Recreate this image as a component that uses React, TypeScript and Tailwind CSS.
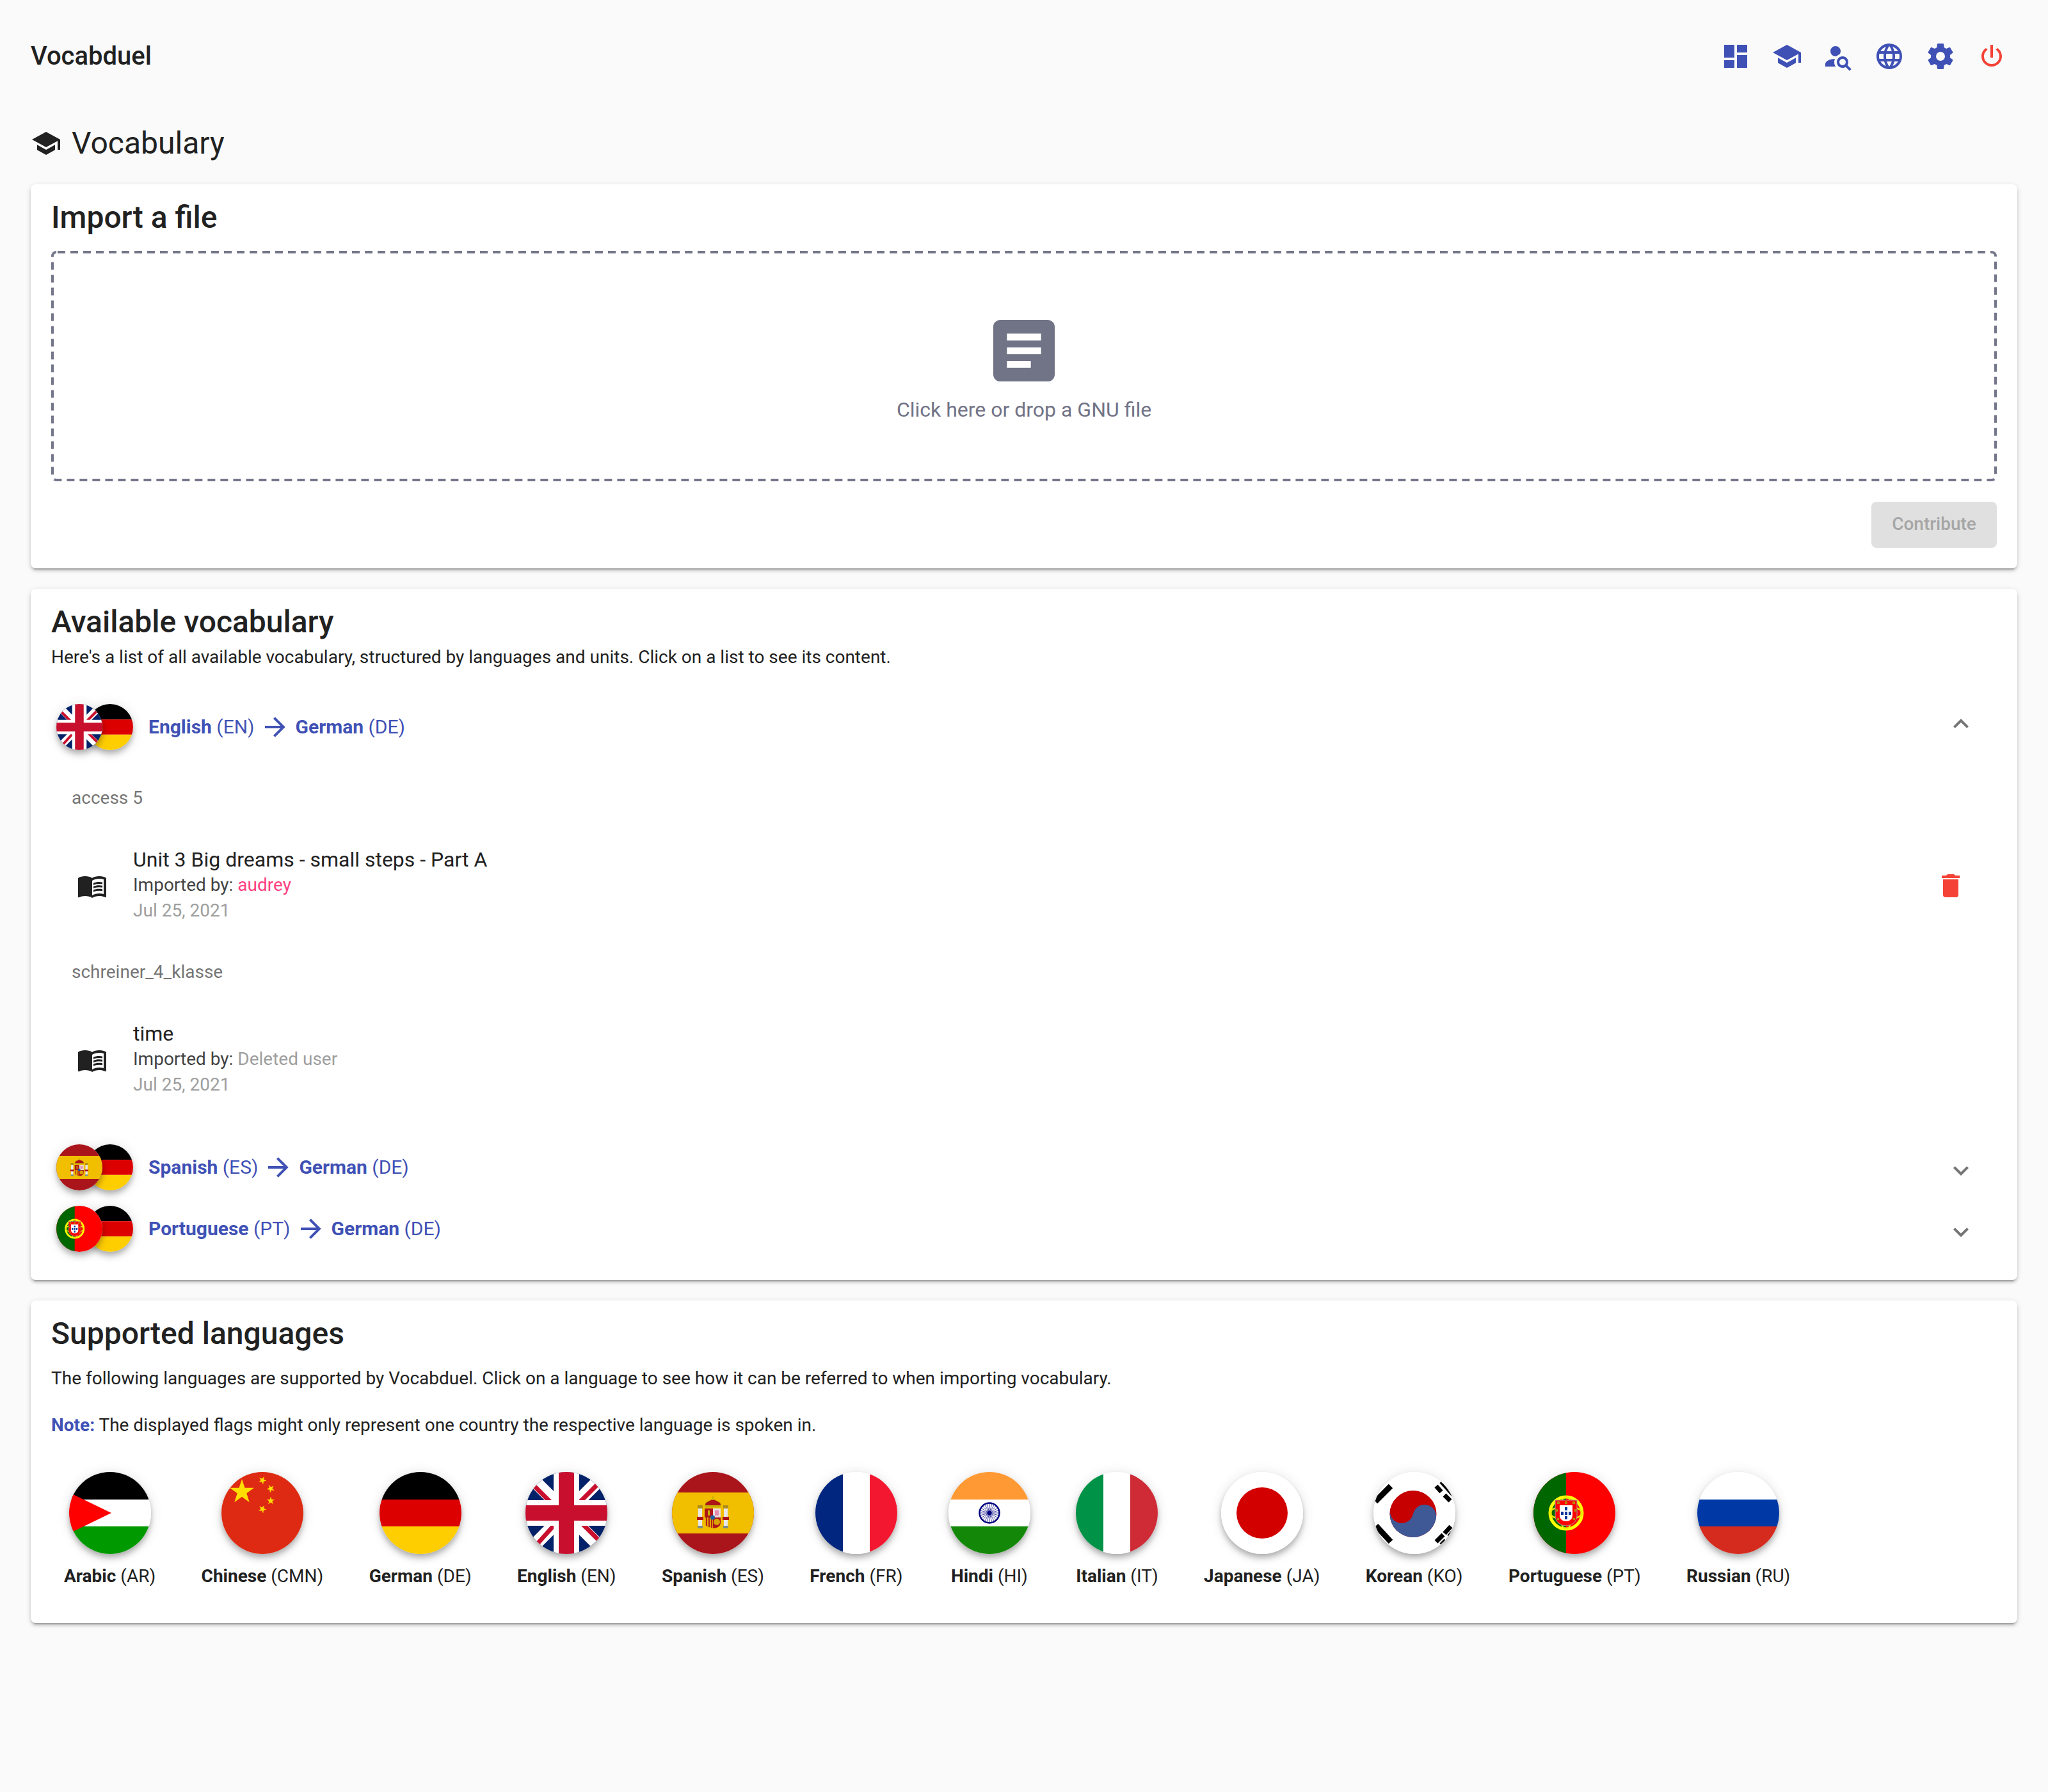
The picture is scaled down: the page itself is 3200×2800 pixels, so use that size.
import { ReactNode } from "react";

const mdi = {
  dashboard: "M13,3V9H21V3M13,21H21V11H13M3,21H11V15H3M3,13H11V3H3V13Z",
  school: "M12,3L1,9L12,15L21,10.09V17H23V9M5,13.18V17.18L12,21L19,17.18V13.18L12,17L5,13.18Z",
  search:
    "M15.5,12C18,12 20,14 20,16.5C20,17.38 19.75,18.21 19.31,18.9L22.39,22L21,23.39L17.88,20.32C17.19,20.75 16.37,21 15.5,21C13,21 11,19 11,16.5C11,14 13,12 15.5,12M15.5,14A2.5,2.5 0 0,0 13,16.5A2.5,2.5 0 0,0 15.5,19A2.5,2.5 0 0,0 18,16.5A2.5,2.5 0 0,0 15.5,14M10,4A4,4 0 0,1 14,8C14,8.91 13.69,9.75 13.18,10.43C12.32,10.75 11.55,11.26 10.91,11.9L10,12A4,4 0 0,1 6,8A4,4 0 0,1 10,4M2,20V18C2,15.88 5.31,14.14 9.5,14C9.18,14.78 9,15.62 9,16.5C9,17.79 9.38,19 10,20H2Z",
  web: "M16.36,14C16.44,13.34 16.5,12.68 16.5,12C16.5,11.32 16.44,10.66 16.36,10H19.74C19.9,10.64 20,11.31 20,12C20,12.69 19.9,13.36 19.74,14M14.59,19.56C15.19,18.45 15.65,17.25 15.97,16H18.92C17.96,17.65 16.43,18.93 14.59,19.56M14.34,14H9.66C9.56,13.34 9.5,12.68 9.5,12C9.5,11.32 9.56,10.65 9.66,10H14.34C14.43,10.65 14.5,11.32 14.5,12C14.5,12.68 14.43,13.34 14.34,14M12,19.96C11.17,18.76 10.5,17.43 10.09,16H13.91C13.5,17.43 12.83,18.76 12,19.96M8,8H5.08C6.03,6.34 7.57,5.06 9.4,4.44C8.8,5.55 8.35,6.75 8,8M5.08,16H8C8.35,17.25 8.8,18.45 9.4,19.56C7.57,18.93 6.03,17.65 5.08,16M4.26,14C4.1,13.36 4,12.69 4,12C4,11.31 4.1,10.64 4.26,10H7.64C7.56,10.66 7.5,11.32 7.5,12C7.5,12.68 7.56,13.34 7.64,14M12,4.03C12.83,5.23 13.5,6.57 13.91,8H10.09C10.5,6.57 11.17,5.23 12,4.03M18.92,8H15.97C15.65,6.75 15.19,5.55 14.59,4.44C16.43,5.07 17.96,6.34 18.92,8M12,2C6.47,2 2,6.5 2,12A10,10 0 0,0 12,22A10,10 0 0,0 22,12A10,10 0 0,0 12,2Z",
  cog: "M12,15.5A3.5,3.5 0 0,1 8.5,12A3.5,3.5 0 0,1 12,8.5A3.5,3.5 0 0,1 15.5,12A3.5,3.5 0 0,1 12,15.5M19.43,12.97C19.47,12.65 19.5,12.33 19.5,12C19.5,11.67 19.47,11.34 19.43,11L21.54,9.37C21.73,9.22 21.78,8.95 21.66,8.73L19.66,5.27C19.54,5.05 19.27,4.96 19.05,5.05L16.56,6.05C16.04,5.66 15.5,5.32 14.87,5.07L14.5,2.42C14.46,2.18 14.25,2 14,2H10C9.75,2 9.54,2.18 9.5,2.42L9.13,5.07C8.5,5.32 7.96,5.66 7.44,6.05L4.95,5.05C4.73,4.96 4.46,5.05 4.34,5.27L2.34,8.73C2.21,8.95 2.27,9.22 2.46,9.37L4.57,11C4.53,11.34 4.5,11.67 4.5,12C4.5,12.33 4.53,12.65 4.57,12.97L2.46,14.63C2.27,14.78 2.21,15.05 2.34,15.27L4.34,18.73C4.46,18.95 4.73,19.03 4.95,18.95L7.44,17.94C7.96,18.34 8.5,18.68 9.13,18.93L9.5,21.58C9.54,21.82 9.75,22 10,22H14C14.25,22 14.46,21.82 14.5,21.58L14.87,18.93C15.5,18.67 16.04,18.34 16.56,17.94L19.05,18.95C19.27,19.03 19.54,18.95 19.66,18.73L21.66,15.27C21.78,15.05 21.73,14.78 21.54,14.63L19.43,12.97Z",
  power:
    "M16.56,5.44L15.11,6.89C16.84,7.94 18,9.83 18,12A6,6 0 0,1 12,18A6,6 0 0,1 6,12C6,9.83 7.16,7.94 8.88,6.88L7.44,5.44C5.36,6.88 4,9.28 4,12A8,8 0 0,0 12,20A8,8 0 0,0 20,12C20,9.28 18.64,6.88 16.56,5.44M13,3H11V13H13",
  textBox: "M14,17H7V15H14M17,13H7V11H17M17,9H7V7H17M19,3H5C3.89,3 3,3.89 3,5V19A2,2 0 0,0 5,21H19A2,2 0 0,0 21,19V5C21,3.89 20.1,3 19,3Z",
  book: "M21 5c-1.11-.35-2.33-.5-3.5-.5-1.95 0-4.05.4-5.5 1.5-1.45-1.1-3.55-1.5-5.5-1.5S2.45 4.9 1 6v14.65c0 .25.25.5.5.5.1 0 .15-.05.25-.05C3.1 20.45 5.05 20 6.5 20c1.95 0 4.05.4 5.5 1.5 1.35-.85 3.8-1.5 5.5-1.5 1.65 0 3.35.3 4.75 1.05.1.05.15.05.25.05.25 0 .5-.25.5-.5V6c-.6-.45-1.25-.75-2-1zm0 13.5c-1.1-.35-2.3-.5-3.5-.5-1.7 0-4.15.65-5.5 1.5V8c1.35-.85 3.8-1.5 5.5-1.5 1.2 0 2.4.15 3.5.5v11.5zM17.5 10.5c.88 0 1.73.09 2.5.26V9.24c-.79-.15-1.64-.24-2.5-.24-1.7 0-3.24.29-4.5.83v1.66c1.13-.64 2.7-.99 4.5-.99zM13 12.49v1.66c1.13-.64 2.7-.99 4.5-.99.88 0 1.73.09 2.5.26V11.9c-.79-.15-1.64-.24-2.5-.24-1.7 0-3.24.3-4.5.83zM17.5 14.33c-1.7 0-3.24.29-4.5.83v1.66c1.13-.64 2.7-.99 4.5-.99.88 0 1.73.09 2.5.26v-1.52c-.79-.16-1.64-.24-2.5-.24z",
  trash: "M19,4H15.5L14.5,3H9.5L8.5,4H5V6H19M6,19A2,2 0 0,0 8,21H16A2,2 0 0,0 18,19V7H6V19Z",
  arrow: "M4,11V13H16L10.5,18.5L11.92,19.92L19.84,12L11.92,4.08L10.5,5.5L16,11H4Z",
  up: "M7.41,15.41L12,10.83L16.59,15.41L18,14L12,8L6,14L7.41,15.41Z",
  down: "M7.41,8.58L12,13.17L16.59,8.58L18,10L12,16L6,10L7.41,8.58Z",
};

function Icon({ d, className }: { d: string; className?: string }) {
  return (
    <svg viewBox="0 0 24 24" fill="currentColor" className={"shrink-0 " + (className || "size-[48px]")}>
      <path d={d} />
    </svg>
  );
}

function star(cx: number, cy: number, r: number, rot: number) {
  const pts: string[] = [];
  for (let i = 0; i < 10; i++) {
    const rad = i % 2 === 0 ? r : r * 0.382;
    const a = ((rot - 90 + i * 36) * Math.PI) / 180;
    pts.push(`${cx + rad * Math.cos(a)},${cy + rad * Math.sin(a)}`);
  }
  return pts.join(" ");
}

function HBands({ a, b, c }: { a: string; b: string; c: string }) {
  return (
    <>
      <rect width="128" height="43" fill={a} />
      <rect y="43" width="128" height="42" fill={b} />
      <rect y="85" width="128" height="43" fill={c} />
    </>
  );
}

function VBands({ a, b, c }: { a: string; b: string; c: string }) {
  return (
    <>
      <rect width="43" height="128" fill={a} />
      <rect x="43" width="42" height="128" fill={b} />
      <rect x="85" width="43" height="128" fill={c} />
    </>
  );
}

const flags: Record<string, ReactNode> = {
  ar: (
    <>
      <HBands a="#000000" b="#ffffff" c="#009900" />
      <polygon points="0,32 66,64 0,96" fill="#ff0000" />
    </>
  ),
  cmn: (
    <>
      <rect width="128" height="128" fill="#de2a12" />
      <polygon points={star(32, 31, 20, 0)} fill="#ffde00" />
      <polygon points={star(64, 13, 6.5, 25)} fill="#ffde00" />
      <polygon points={star(77, 26, 6.5, 45)} fill="#ffde00" />
      <polygon points={star(77, 45, 6.5, 0)} fill="#ffde00" />
      <polygon points={star(64, 58, 6.5, 25)} fill="#ffde00" />
    </>
  ),
  de: <HBands a="#000000" b="#dd0000" c="#ffce00" />,
  en: (
    <>
      <rect width="128" height="128" fill="#012169" />
      <path d="M0 0L128 128M128 0L0 128" stroke="#ffffff" strokeWidth="20" />
      <path d="M8 16L44 52M120 12L84 48M8 124L44 84M124 116L84 76" stroke="#c8102e" strokeWidth="7" />
      <rect x="44" width="40" height="128" fill="#ffffff" />
      <rect y="44" width="128" height="40" fill="#ffffff" />
      <rect x="52" width="24" height="128" fill="#c8102e" />
      <rect y="52" width="128" height="24" fill="#c8102e" />
    </>
  ),
  es: (
    <>
      <rect width="128" height="128" fill="#aa151b" />
      <rect y="32" width="128" height="64" fill="#f1bf00" />
      {/* coat of arms */}
      <path d="M52 55c-1-4 0-7 2-8l4-2 6-3 6 3 4 2c2 1 3 4 2 8z" fill="#ad1519" stroke="#c8b100" strokeWidth="1" />
      <rect x="52" y="52" width="24" height="3" fill="#c8b100" />
      <rect x="63" y="38" width="2" height="6" fill="#c8b100" />
      <rect x="41" y="55" width="6" height="30" fill="#e8e8e8" />
      <rect x="81" y="55" width="6" height="30" fill="#e8e8e8" />
      <rect x="40" y="52" width="8" height="5" fill="#ad8b16" />
      <rect x="80" y="52" width="8" height="5" fill="#ad8b16" />
      <rect x="40" y="84" width="8" height="4" fill="#7d8c8c" />
      <rect x="80" y="84" width="8" height="4" fill="#7d8c8c" />
      <path d="M39 70h10v5H39zM79 70h10v5H79z" fill="#ad1519" />
      <rect x="51" y="57" width="13" height="14" fill="#ad1519" />
      <rect x="64" y="57" width="12" height="14" fill="#eadfe0" />
      <path d="M67 60h6v8h-6z" fill="#e28ab0" />
      <path d="M51 71h13v17c-7 0-13-3-13-9z" fill="#e2a400" />
      <path d="M54 71v13M58 71v15M62 71v16" stroke="#ad1519" strokeWidth="1.8" />
      <path d="M64 71h12v8c0 6-6 9-12 9z" fill="#ad1519" />
      <circle cx="70" cy="78" r="5" fill="#d9a300" />
      <circle cx="63.500" cy="71" r="3.500" fill="#1f5f9e" />
      <path d="M56 60h3v8h-3z" fill="#c8b100" />
    </>
  ),
  fr: <VBands a="#00267f" b="#ffffff" c="#f31830" />,
  hi: (
    <>
      <HBands a="#ff9933" b="#ffffff" c="#138808" />
      <circle cx="64" cy="64" r="15.500" fill="none" stroke="#000080" strokeWidth="2.500" />
      {Array.from({ length: 24 }).map((_, i) => {
        const a = (i * 15 * Math.PI) / 180;
        return (
          <line
            key={i}
            x1={64}
            y1={64}
            x2={64 + 15 * Math.cos(a)}
            y2={64 + 15 * Math.sin(a)}
            stroke="#000080"
            strokeWidth="0.700"
          />
        );
      })}
      <circle cx="64" cy="64" r="3.500" fill="#000080" />
    </>
  ),
  it: <VBands a="#009246" b="#ffffff" c="#ce2b37" />,
  ja: (
    <>
      <rect width="128" height="128" fill="#ffffff" />
      <circle cx="64" cy="64" r="40" fill="#d30000" />
    </>
  ),
  ko: (
    <>
      <rect width="128" height="128" fill="#ffffff" />
      <g transform="rotate(12 62 65.500)">
        <circle cx="62" cy="65.500" r="36.500" fill="#c60000" />
        <path d="M25.500 65.500a36.500 36.500 0 0 0 73 0z" fill="#3f5896" />
        <circle cx="43.750" cy="65.500" r="18.250" fill="#c60000" />
        <circle cx="80.250" cy="65.500" r="18.250" fill="#3f5896" />
      </g>
      <path d="M3 46L27 22M4 84L27 109" stroke="#000000" strokeWidth="9" />
      <path d="M98 22L106 31M111 36L120 45M106 15L125 36" stroke="#000000" strokeWidth="7" />
      <path d="M98 109L109 98M111 96L121 85M106 114L113 107M118 101L125 93" stroke="#000000" strokeWidth="7" />
    </>
  ),
  pt: (
    <>
      <rect width="128" height="128" fill="#ff0000" />
      <rect width="51" height="128" fill="#006600" />
      <circle cx="51" cy="64" r="25" fill="none" stroke="#ffff00" strokeWidth="5" />
      <ellipse cx="51" cy="64" rx="25" ry="10" fill="none" stroke="#e8e800" strokeWidth="2.500" />
      <ellipse cx="51" cy="64" rx="10" ry="25" fill="none" stroke="#e8e800" strokeWidth="2" />
      <path d="M34 44h34v24c0 10-8 16-17 16s-17-6-17-16z" fill="#ff0000" stroke="#a0a0a0" strokeWidth="1" />
      <path d="M41 52h20v16c0 6-5 9-10 9s-10-3-10-9z" fill="#ffffff" />
      <path d="M49 55h4v5h-4zM43 62h4v5h-4zM49 62h4v5h-4zM55 62h4v5h-4zM49 69h4v5h-4z" fill="#003399" />
      <path d="M37 46h4v4h-4zM49 46h4v4h-4zM61 46h4v4h-4zM35 58h3v4h-3zM64 58h3v4h-3zM37 72h3v3h-3zM62 72h3v3h-3z" fill="#b8860b" />
    </>
  ),
  ru: <HBands a="#ffffff" b="#0039a6" c="#d52b1e" />,
};

function Flag({ code, small }: { code: string; small?: boolean }) {
  return (
    <div
      className={
        small
          ? "size-[72px] shrink-0 overflow-hidden rounded-full bg-white shadow-[0_4px_8px_-2px_rgba(0,0,0,0.2),0_8px_10px_0_rgba(0,0,0,0.14),0_2px_20px_0_rgba(0,0,0,0.12)]"
          : "size-[128px] shrink-0 overflow-hidden rounded-full bg-white shadow-[0_4px_8px_-2px_rgba(0,0,0,0.2),0_8px_10px_0_rgba(0,0,0,0.14),0_2px_20px_0_rgba(0,0,0,0.12)]"
      }
    >
      <svg viewBox="0 0 128 128" className="block size-full">
        {flags[code]}
      </svg>
    </div>
  );
}

function Card({ children, className }: { children: ReactNode; className?: string }) {
  return (
    <div
      className={
        "rounded-[8px] bg-white px-[32px] pt-[16px] shadow-[0_6px_2px_-4px_rgba(0,0,0,0.2),0_4px_4px_0_rgba(0,0,0,0.14),0_2px_10px_0_rgba(0,0,0,0.12)] " +
        (className || "")
      }
    >
      {children}
    </div>
  );
}

function CardTitle({ children }: { children: ReactNode }) {
  return <h2 className="h-[72px] text-[48px] leading-[72px] font-medium text-[#212121]">{children}</h2>;
}

function PairRow({
  from,
  fromName,
  fromCode,
  open,
}: {
  from: string;
  fromName: string;
  fromCode: string;
  open?: boolean;
}) {
  return (
    <div className="flex h-[96px] items-center pl-[8px] pr-[32px]">
      <div className="flex">
        <div className="relative z-10">
          <Flag code={from} small />
        </div>
        <div className="-ml-[24px]">
          <Flag code="de" small />
        </div>
      </div>
      <div className="ml-[24px] flex items-center text-[30px] leading-[40px] text-[#3f51b5]">
        <span>
          <b className="font-bold">{fromName}</b> ({fromCode})
        </span>
        <Icon d={mdi.arrow} className="mx-[8px] size-[48px]" />
        <span>
          <b className="font-bold">German</b> (DE)
        </span>
      </div>
      <div className="ml-auto text-[#757575]">
        {open ? (
          <Icon d={mdi.up} className="size-[48px] -translate-y-[5px]" />
        ) : (
          <Icon d={mdi.down} className="size-[48px] translate-y-[5px]" />
        )}
      </div>
    </div>
  );
}

function VocabList({
  title,
  name,
  owner,
  ownerClass,
  removable,
}: {
  title: string;
  name: string;
  owner: string;
  ownerClass: string;
  removable?: boolean;
}) {
  return (
    <>
      <div className="flex h-[96px] items-center pb-[2px] pl-[32px] text-[28px] text-[#757575]">{title}</div>
      <div className="flex h-[176px] items-center pl-[40px] pr-[48px]">
        <Icon d={mdi.book} className="size-[48px] text-[#212121]" />
        <div className="mb-[2px] ml-[40px] flex flex-col">
          <div className="text-[32px] leading-[40px] text-[#212121]">{name}</div>
          <div className="text-[28px] leading-[40px] text-[#424242]">
            Imported by: <span className={ownerClass}>{owner}</span>
          </div>
          <div className="text-[28px] leading-[40px] text-[#9e9e9e]">Jul 25, 2021</div>
        </div>
        {removable && <Icon d={mdi.trash} className="ml-auto size-[48px] text-[#f44336]" />}
      </div>
    </>
  );
}

const languages = [
  ["ar", "Arabic", "AR"],
  ["cmn", "Chinese", "CMN"],
  ["de", "German", "DE"],
  ["en", "English", "EN"],
  ["es", "Spanish", "ES"],
  ["fr", "French", "FR"],
  ["hi", "Hindi", "HI"],
  ["it", "Italian", "IT"],
  ["ja", "Japanese", "JA"],
  ["ko", "Korean", "KO"],
  ["pt", "Portuguese", "PT"],
  ["ru", "Russian", "RU"],
];

export default function App() {
  return (
    <div className="min-h-[2800px] bg-[#fafafa] font-['Roboto',sans-serif] text-[#212121]">
      {/* Top bar */}
      <header className="flex h-[176px] items-center justify-between pl-[48px] pr-[64px]">
        <div className="text-[40px] font-medium">Vocabduel</div>
        <div className="flex items-center gap-[32px] text-[#3f51b5]">
          <Icon d={mdi.dashboard} />
          <Icon d={mdi.school} />
          <Icon d={mdi.search} />
          <Icon d={mdi.web} />
          <Icon d={mdi.cog} />
          <Icon d={mdi.power} className="size-[48px] text-[#f44336]" />
        </div>
      </header>

      <div className="flex h-[112px] items-start gap-[16px] px-[48px] pt-[24px]">
        <Icon d={mdi.school} />
        <h1 className="text-[48px] leading-[48px] font-normal">Vocabulary</h1>
      </div>

      <div className="flex flex-col gap-[32px] px-[48px]">
        {/* Import */}
        <Card className="pb-[32px]">
          <CardTitle>Import a file</CardTitle>
          <div className="relative mt-[16px] flex h-[360px] flex-col items-center justify-center rounded-[8px]">
            {/* dashes drawn so their length matches the reference */}
            <svg className="pointer-events-none absolute inset-0 size-full overflow-visible">
              <rect
                x="2"
                y="2"
                rx="6"
                className="h-[calc(100%-4px)] w-[calc(100%-4px)]"
                fill="none"
                stroke="#74768a"
                strokeWidth="4"
                strokeDasharray="12 8"
                strokeDashoffset="-2"
              />
            </svg>
            <Icon d={mdi.textBox} className="size-[128px] text-[#717386]" />
            <div className="mt-[8px] text-[32px] leading-[40px] text-[#717386]">Click here or drop a GNU file</div>
          </div>
          <div className="mt-[32px] flex justify-end">
            <button className="h-[72px] w-[196px] rounded-[8px] bg-[#e0e0e0] pb-[2px] text-[28px] font-medium text-[#a6a6a6]">
              Contribute
            </button>
          </div>
        </Card>

        {/* Available vocabulary */}
        <Card className="pb-[32px]">
          <CardTitle>Available vocabulary</CardTitle>
          <p className="-mt-[1px] h-[40px] text-[28px] leading-[40px]">
            Here's a list of all available vocabulary, structured by languages and units. Click on a list to see its
            content.
          </p>
          <div className="mt-[41px]">
            <PairRow from="en" fromName="English" fromCode="EN" open />
            <div className="pb-[32px] pt-[16px]">
              <VocabList
                title="access 5"
                name="Unit 3 Big dreams - small steps - Part A"
                owner="audrey"
                ownerClass="text-[#ff4081]"
                removable
              />
              <VocabList
                title="schreiner_4_klasse"
                name="time"
                owner="Deleted user"
                ownerClass="text-[#9e9e9e]"
              />
            </div>
            <PairRow from="es" fromName="Spanish" fromCode="ES" />
            <PairRow from="pt" fromName="Portuguese" fromCode="PT" />
          </div>
        </Card>

        {/* Supported languages */}
        <Card className="pb-[53px]">
          <CardTitle>Supported languages</CardTitle>
          <p className="mt-[14px] text-[28px] leading-[40px]">
            The following languages are supported by Vocabduel. Click on a language to see how it can be referred to
            when importing vocabulary.
          </p>
          <p className="mt-[33px] text-[28px] leading-[40px]">
            <b className="font-bold text-[#3f51b5]">Note:</b> The displayed flags might only represent one country the
            respective language is spoken in.
          </p>
          <div className="mt-[53px] flex gap-[71.4px] pl-[20px]">
            {languages.map(([code, name, tag]) => (
              <div key={code} className="flex flex-col items-center">
                <Flag code={code} />
                <div className="mt-[15px] text-[28px] leading-[40px] whitespace-nowrap">
                  <b className="font-bold">{name}</b> <span className="font-normal">({tag})</span>
                </div>
              </div>
            ))}
          </div>
        </Card>
      </div>
    </div>
  );
}
